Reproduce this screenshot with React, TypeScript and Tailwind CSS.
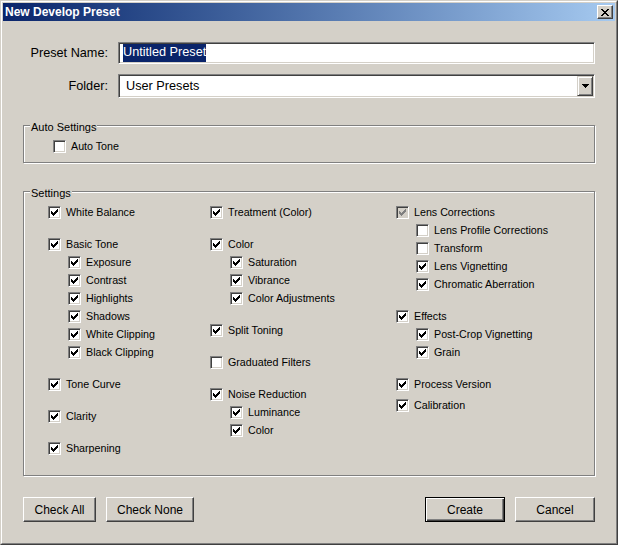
import React from "react";

interface Item {
  label: string;
  checked: boolean;
  disabled?: boolean;
  tight?: boolean;
  children?: Item[];
}

const columns: Item[][] = [
  [
    { label: "White Balance", checked: true },
    {
      label: "Basic Tone",
      checked: true,
      children: [
        { label: "Exposure", checked: true },
        { label: "Contrast", checked: true },
        { label: "Highlights", checked: true },
        { label: "Shadows", checked: true },
        { label: "White Clipping", checked: true },
        { label: "Black Clipping", checked: true },
      ],
    },
    { label: "Tone Curve", checked: true },
    { label: "Clarity", checked: true },
    { label: "Sharpening", checked: true },
  ],
  [
    { label: "Treatment (Color)", checked: true },
    {
      label: "Color",
      checked: true,
      children: [
        { label: "Saturation", checked: true },
        { label: "Vibrance", checked: true },
        { label: "Color Adjustments", checked: true },
      ],
    },
    { label: "Split Toning", checked: true },
    { label: "Graduated Filters", checked: false },
    {
      label: "Noise Reduction",
      checked: true,
      children: [
        { label: "Luminance", checked: true },
        { label: "Color", checked: true },
      ],
    },
  ],
  [
    {
      label: "Lens Corrections",
      checked: true,
      disabled: true,
      children: [
        { label: "Lens Profile Corrections", checked: false },
        { label: "Transform", checked: false },
        { label: "Lens Vignetting", checked: true },
        { label: "Chromatic Aberration", checked: true },
      ],
    },
    {
      label: "Effects",
      checked: true,
      children: [
        { label: "Post-Crop Vignetting", checked: true },
        { label: "Grain", checked: true },
      ],
    },
    { label: "Process Version", checked: true },
    { label: "Calibration", checked: true, tight: true },
  ],
];

// classic 7x7 check glyph, 3px per column
const CHECK_PATH =
  "M0 2h1v3h-1zM1 3h1v3h-1zM2 4h1v3h-1zM3 3h1v3h-1zM4 2h1v3h-1zM5 1h1v3h-1zM6 0h1v3h-1z";

function Checkbox({ checked, disabled }: { checked: boolean; disabled?: boolean }) {
  return (
    <div
      className={
        "relative w-[13px] h-[13px] flex-shrink-0 border-t border-l border-t-[#808080] border-l-[#808080] border-r border-b border-r-white border-b-white shadow-[inset_1px_1px_0_#404040,inset_-1px_-1px_0_#d4d0c8] " +
        (disabled ? "bg-[#d4d0c8]" : "bg-white")
      }
    >
      {checked && (
        <svg
          width="7"
          height="7"
          viewBox="0 0 7 7"
          shapeRendering="crispEdges"
          className="absolute left-[2px] top-[2px]"
        >
          <path d={CHECK_PATH} fill={disabled ? "#808080" : "#000"} />
        </svg>
      )}
    </div>
  );
}

function CheckRow({ item }: { item: Item }) {
  return (
    <div className="h-[18px] flex items-center">
      <Checkbox checked={item.checked} disabled={item.disabled} />
      <span className="ml-[5px] text-[10.7px] leading-[13px] text-black whitespace-nowrap">
        {item.label}
      </span>
    </div>
  );
}

function GroupBox({
  title,
  className,
  children,
}: {
  title: string;
  className?: string;
  children: React.ReactNode;
}) {
  return (
    <div
      className={
        "relative border border-[#808080] shadow-[1px_1px_0_#fff,inset_1px_1px_0_#fff] " +
        (className ?? "")
      }
    >
      <span className="absolute left-[6px] -top-[5px] px-[1px] bg-[#d4d0c8] text-[11px] leading-[13px] text-black">
        {title}
      </span>
      {children}
    </div>
  );
}

function Button({
  label,
  width,
  isDefault,
}: {
  label: string;
  width: string;
  isDefault?: boolean;
}) {
  return (
    <button
      className={
        width +
        " h-[25px] bg-[#d4d0c8] text-[12px] text-black flex items-center justify-center " +
        (isDefault
          ? "border border-black shadow-[inset_1px_1px_0_#fff,inset_-1px_-1px_0_#404040,inset_-2px_-2px_0_#808080]"
          : "border-t border-l border-t-white border-l-white border-r border-b border-r-[#404040] border-b-[#404040] shadow-[inset_-1px_-1px_0_#808080]")
      }
    >
      {label}
    </button>
  );
}

export default function App() {
  return (
    <div className="w-[618px] h-[545px] font-['Liberation_Sans',Arial,sans-serif] border-t border-l border-t-[#d4d0c8] border-l-[#d4d0c8] border-r border-b border-r-[#404040] border-b-[#404040]">
      <div className="h-full border-t border-l border-t-white border-l-white border-r border-b border-r-[#808080] border-b-[#808080] bg-[#d4d0c8] p-[1px] flex flex-col">
        {/* Title bar */}
        <div className="h-[18px] flex items-center justify-between bg-gradient-to-r from-[#0a246a] to-[#a6caf0] pl-[2px] pr-[2px]">
          <span className="text-white font-bold text-[12px] leading-[14px]">New Develop Preset</span>
          <div className="w-[16px] h-[14px] bg-[#d4d0c8] flex items-center justify-center border-t border-l border-t-white border-l-white border-r border-b border-r-[#404040] border-b-[#404040] shadow-[inset_-1px_-1px_0_#808080]">
            <svg width="8" height="7" viewBox="0 0 8 7" shapeRendering="crispEdges">
              <path
                d="M0 0h2v1h-2zM6 0h2v1h-2zM1 1h2v1h-2zM5 1h2v1h-2zM2 2h4v1h-4zM3 3h2v1h-2zM2 4h4v1h-4zM1 5h2v1h-2zM5 5h2v1h-2zM0 6h2v1h-2zM6 6h2v1h-2z"
                fill="#000"
              />
            </svg>
          </div>
        </div>

        {/* Content */}
        <div className="flex-1 flex flex-col px-[20px] pt-[21px]">
          <div className="flex items-center h-[22px]">
            <label className="w-[85px] pt-[1px] text-right text-[12.7px] text-black">Preset Name:</label>
            <div className="ml-[10px] flex-1 h-[22px] bg-white flex items-center border-t border-l border-t-[#808080] border-l-[#808080] border-r border-b border-r-white border-b-white shadow-[inset_1px_1px_0_#404040,inset_-1px_-1px_0_#d4d0c8] p-[1px]">
              <span className="ml-[3px] h-full flex items-center bg-[#0a246a] text-white text-[12.7px]">
                Untitled Preset
              </span>
            </div>
          </div>

          <div className="flex items-center h-[24px] mt-[10px]">
            <label className="w-[85px] pt-[2px] text-right text-[12.7px] text-black">Folder:</label>
            <div className="ml-[10px] flex-1 h-[24px] bg-white flex items-center border-t border-l border-t-[#808080] border-l-[#808080] border-r border-b border-r-white border-b-white shadow-[inset_1px_1px_0_#404040,inset_-1px_-1px_0_#d4d0c8] p-[1px]">
              <span className="ml-[6px] pt-[2px] flex-1 text-[12.7px] text-black">User Presets</span>
              <div className="w-[16px] h-full bg-[#d4d0c8] flex items-center justify-center border-t border-l border-t-[#d4d0c8] border-l-[#d4d0c8] border-r border-b border-r-[#404040] border-b-[#404040] shadow-[inset_1px_1px_0_#fff,inset_-1px_-1px_0_#808080]">
                <svg width="7" height="4" viewBox="0 0 7 4" shapeRendering="crispEdges">
                  <path d="M0 0h7v1h-7zM1 1h5v1h-5zM2 2h3v1h-3zM3 3h1v1h-1z" fill="#000" />
                </svg>
              </div>
            </div>
          </div>

          <GroupBox title="Auto Settings" className="mt-[27px] h-[38px] pt-[11px] pl-[29px]">
            <CheckRow item={{ label: "Auto Tone", checked: false }} />
          </GroupBox>

          <GroupBox title="Settings" className="mt-[28px] h-[285px] pt-[11px] pl-[24px]">
            <div className="grid grid-cols-[162px_186px_1fr]">
              {columns.map((col, ci) => (
                <div key={ci} className="flex flex-col">
                  {col.map((item, gi) => (
                    <div
                      key={item.label}
                      className={gi === 0 ? "" : item.tight ? "mt-[3px]" : "mt-[14px]"}
                    >
                      <CheckRow item={item} />
                      {item.children && (
                        <div className="pl-[20px]">
                          {item.children.map((child) => (
                            <CheckRow key={child.label} item={child} />
                          ))}
                        </div>
                      )}
                    </div>
                  ))}
                </div>
              ))}
            </div>
          </GroupBox>

          <div className="mt-[21px] flex items-center">
            <Button label="Check All" width="w-[73px]" />
            <div className="ml-[10px]">
              <Button label="Check None" width="w-[88px]" />
            </div>
            <div className="ml-auto">
              <Button label="Create" width="w-[80px]" isDefault />
            </div>
            <div className="ml-[10px]">
              <Button label="Cancel" width="w-[80px]" />
            </div>
          </div>
        </div>
      </div>
    </div>
  );
}
